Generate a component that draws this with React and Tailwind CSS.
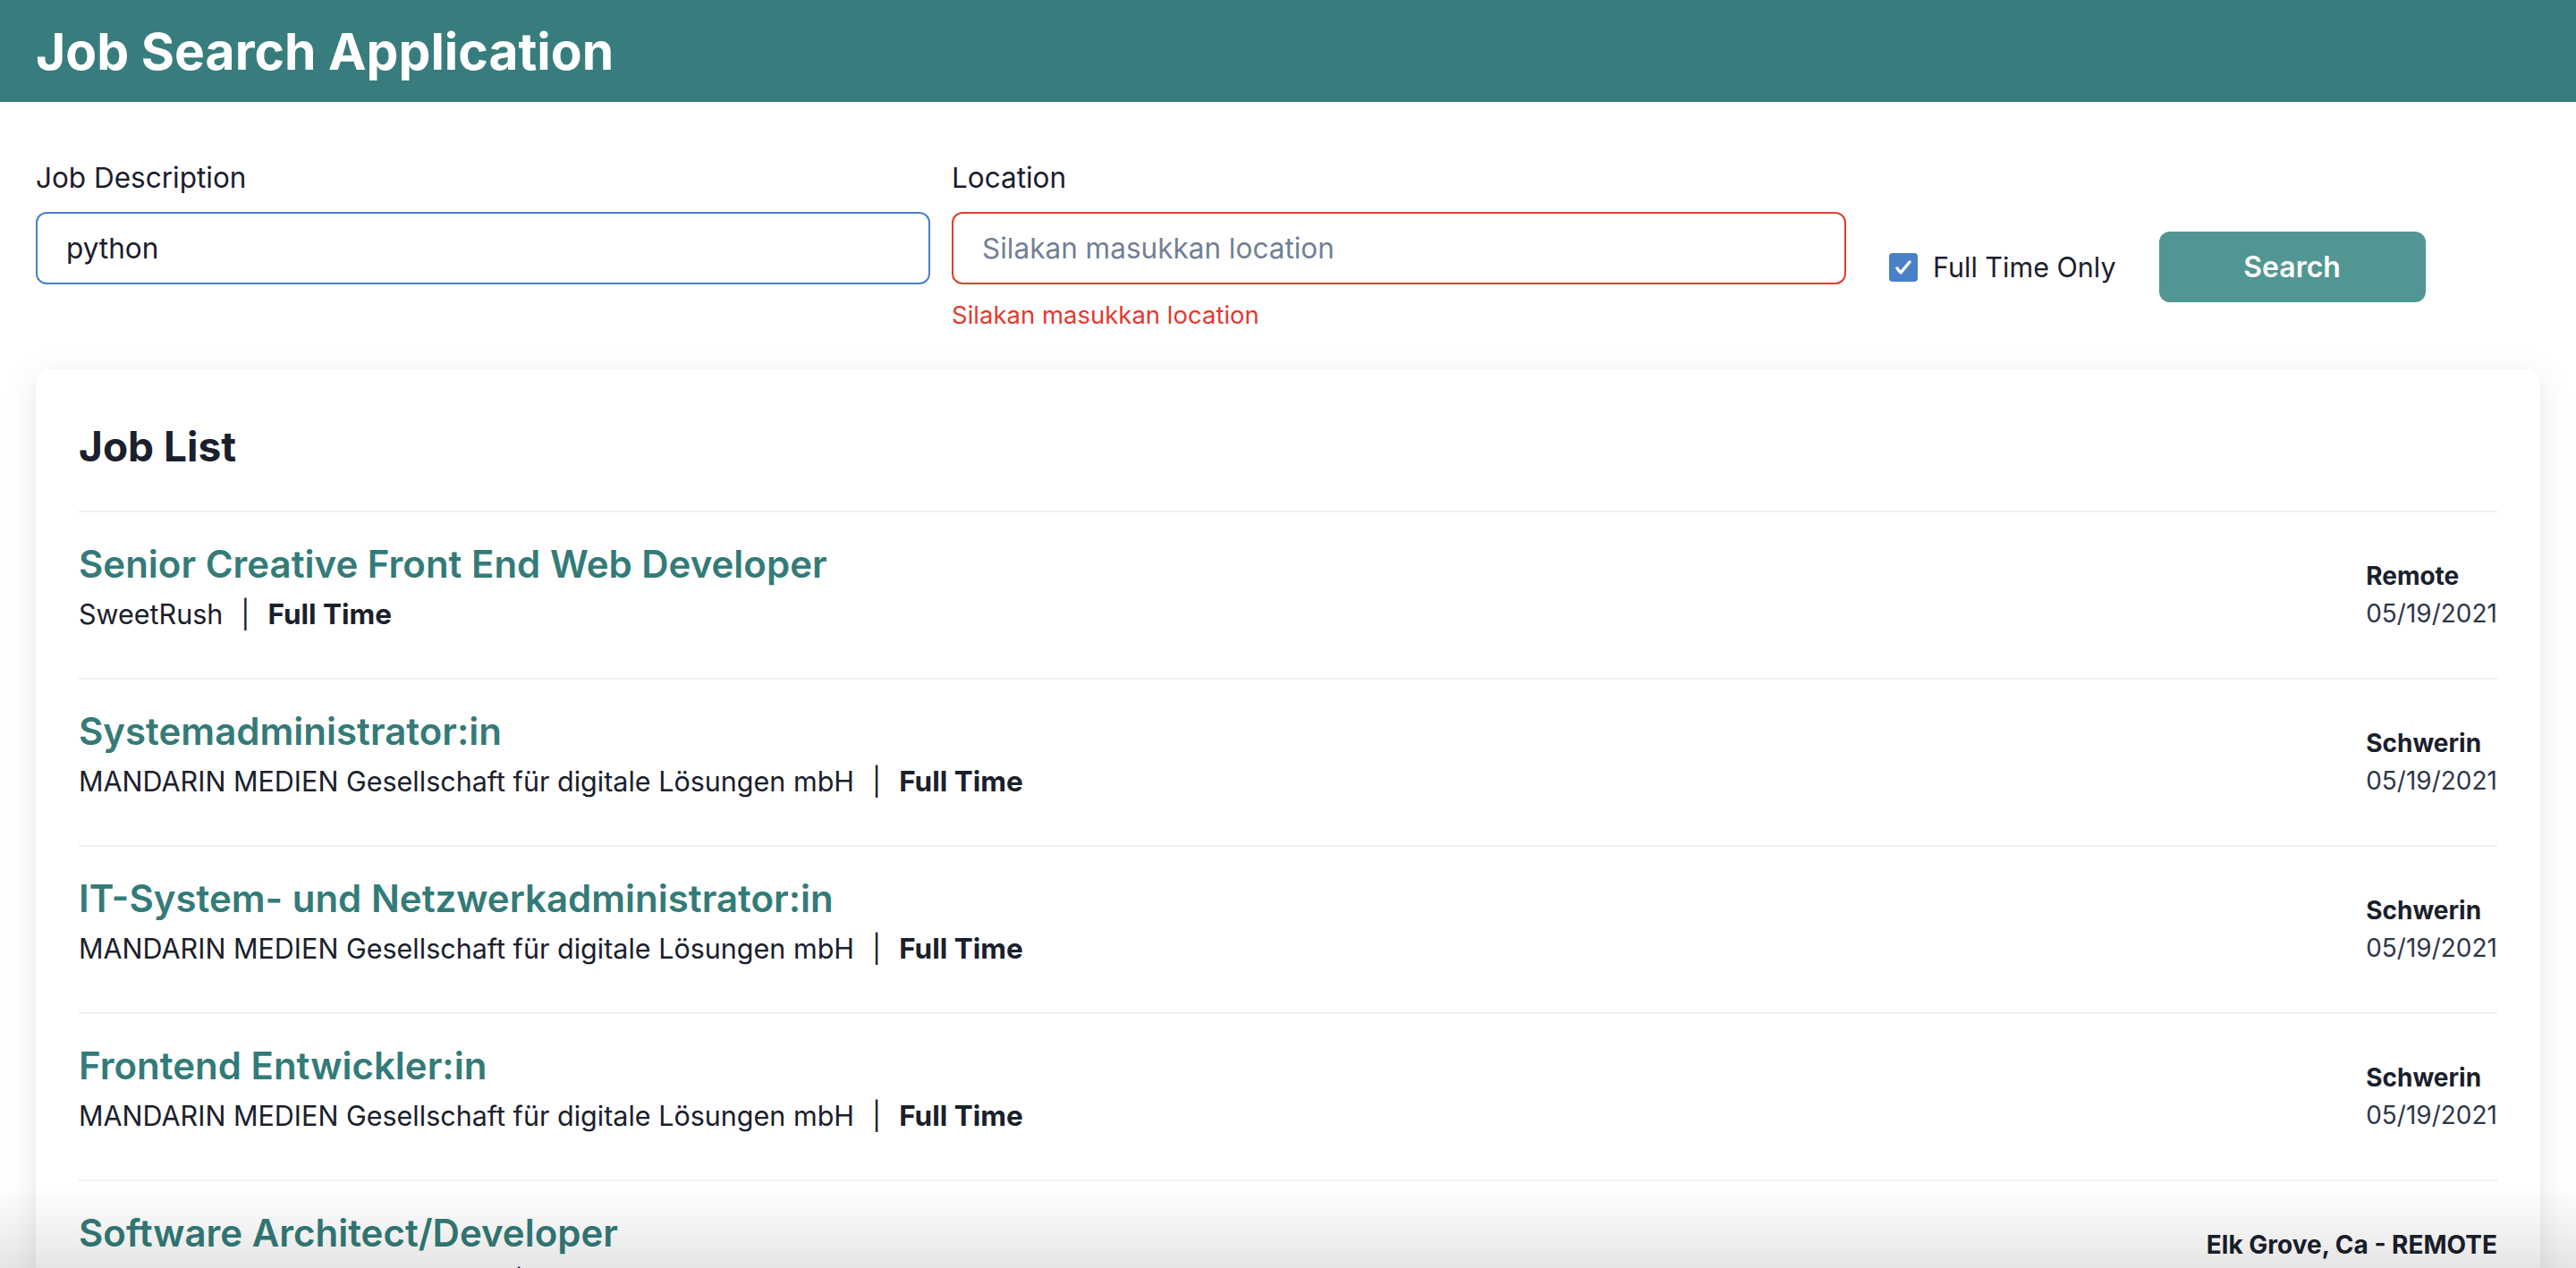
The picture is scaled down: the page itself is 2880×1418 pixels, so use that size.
import { useState } from "react";

const jobs = [
  { title: "Senior Creative Front End Web Developer", company: "SweetRush", type: "Full Time", location: "Remote", date: "05/19/2021" },
  { title: "Systemadministrator:in", company: "MANDARIN MEDIEN Gesellschaft für digitale Lösungen mbH", type: "Full Time", location: "Schwerin", date: "05/19/2021" },
  { title: "IT-System- und Netzwerkadministrator:in", company: "MANDARIN MEDIEN Gesellschaft für digitale Lösungen mbH", type: "Full Time", location: "Schwerin", date: "05/19/2021" },
  { title: "Frontend Entwickler:in", company: "MANDARIN MEDIEN Gesellschaft für digitale Lösungen mbH", type: "Full Time", location: "Schwerin", date: "05/19/2021" },
  { title: "Software Architect/Developer", company: "Elk Grove Unified School District", type: "Full Time", location: "Elk Grove, Ca - REMOTE", date: "05/19/2021" },
  { title: "Senior Backend Engineer", company: "SweetRush", type: "Full Time", location: "Remote", date: "05/18/2021" },
];

const JobItem = ({ job }) => (
  <div className="flex items-start justify-between border-t-2 border-[#edf2f7] pt-[30px] pb-[46px]">
    <div>
      <div className="text-[42px] leading-[56px] font-semibold text-[#337b78]">{job.title}</div>
      <div className="mt-[3px] text-[30.5px] leading-[50px] text-[#1a202c]">
        {job.company}
        <span className="mx-[20px]">|</span>
        <span className="text-[31.5px] font-bold">{job.type}</span>
      </div>
    </div>
    <div className="mt-[20px] text-[28px] leading-[42px] text-[#1a202c]">
      <div className="font-bold">{job.location}</div>
      <div className="text-[#2d3748]">{job.date}</div>
    </div>
  </div>
);

export default function App() {
  const [description, setDescription] = useState("python");
  const [location, setLocation] = useState("");
  const [fullTime, setFullTime] = useState(true);

  return (
    <div className="min-h-screen bg-white font-['Inter',sans-serif] text-[#1a202c]">
      <header className="flex h-[114px] items-center bg-[#387d7d] px-[40px]">
        <h1 className="text-[57px] font-bold leading-none text-white">Job Search Application</h1>
      </header>

      <main className="px-[40px] pt-[61px]">
        <div className="flex items-start">
          <div className="w-[1000px]">
            <label className="block text-[31.5px] leading-[48px] mb-[14px]">Job Description</label>
            <input
              value={description}
              onChange={(e) => setDescription(e.target.value)}
              className="h-[81px] w-full rounded-[12px] border-2 border-[#4a80c8] px-[32px] text-[31.5px] text-[#1a202c] outline-none"
            />
          </div>
          <div className="ml-[24px] w-[1000px]">
            <label className="block text-[31.5px] leading-[48px] mb-[14px]">Location</label>
            <input
              value={location}
              onChange={(e) => setLocation(e.target.value)}
              placeholder="Silakan masukkan location"
              className="h-[81px] w-full rounded-[12px] border-2 border-[#e53b2f] px-[32px] text-[31.5px] text-[#1a202c] outline-none placeholder:text-[#718096]"
            />
            <div className="mt-[13px] text-[27.5px] leading-[42px] text-[#e4392f]">Silakan masukkan location</div>
          </div>
          <div className="ml-[48px] mt-[84px] flex items-center">
            <label className="flex items-center text-[30.5px] leading-[48px]">
              <span
                onClick={() => setFullTime(!fullTime)}
                className="flex h-[32px] w-[32px] items-center justify-center rounded-[4px] bg-[#4a80c8]"
              >
                {fullTime && (
                  <svg viewBox="0 0 24 24" className="h-[24px] w-[24px]" fill="none" stroke="white" strokeWidth="3.5" strokeLinecap="round" strokeLinejoin="round">
                    <path d="M5 13l4 5L19 6" />
                  </svg>
                )}
              </span>
              <span className="ml-[17px]">Full Time Only</span>
            </label>
            <button className="ml-[48px] h-[79px] w-[298px] rounded-[12px] bg-[#519692] text-[32px] font-semibold text-white">
              Search
            </button>
          </div>
        </div>

        <div className="mt-[40px] rounded-[16px] bg-white px-[48px] pt-[58px] shadow-[0_10px_40px_rgba(0,0,0,0.09),0_2px_8px_rgba(0,0,0,0.03)]">
          <h2 className="mb-[44px] text-[46px] font-bold leading-[56px] text-[#1a202c]">Job List</h2>
          <div>
            {jobs.map((job, i) => (
              <JobItem key={i} job={job} />
            ))}
          </div>
        </div>
      </main>

      <div className="pointer-events-none fixed bottom-0 left-0 right-0 h-[90px] bg-gradient-to-b from-transparent to-black/10" />
    </div>
  );
}
